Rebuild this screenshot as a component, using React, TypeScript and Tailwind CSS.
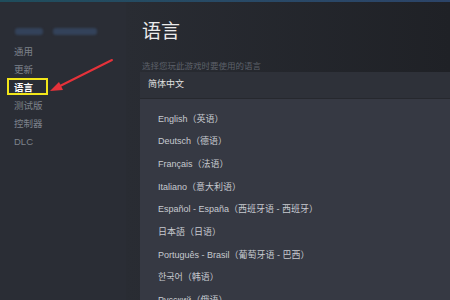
import React from "react";

const langs = [
  "English（英语）",
  "Deutsch（德语）",
  "Français（法语）",
  "Italiano（意大利语）",
  "Español - España（西班牙语 - 西班牙）",
  "日本語（日语）",
  "Português - Brasil（葡萄牙语 - 巴西）",
  "한국어（韩语）",
  "Русский（俄语）",
];

const side = ["通用", "更新", "语言", "测试版", "控制器", "DLC"];

export default function App() {
  return (
    <div
      className="w-[450px] h-[300px] overflow-hidden flex flex-col bg-[#24262d]"
      style={{ fontFamily: '"Liberation Sans", "Noto Sans CJK SC", sans-serif' }}
    >
      <div className="h-[2px] shrink-0 bg-gradient-to-r from-[#1f4d5c] via-[#284a66] to-[#2c4468]" />
      <div className="flex flex-1 min-h-0">
        {/* sidebar */}
        <div className="w-[126px] shrink-0 bg-[#2a2d35] relative">
          <div className="flex gap-[10px] pl-[15px] pt-[26px]">
            <div className="w-[28px] h-[7px] rounded-[3px] bg-[#33425a] blur-[1px]" />
            <div className="w-[44px] h-[7px] rounded-[3px] bg-[#33425a] blur-[1px]" />
          </div>
          <div className="flex flex-col pt-[8px]">
            {side.map((s) => (
              <div
                key={s}
                className={
                  "h-[18px] flex items-center pl-[14px] text-[9.5px] " +
                  (s === "语言" ? "text-white font-bold" : "text-[#7d828b]")
                }
              >
                {s === "语言" ? (
                  <span className="relative">
                    {s}
                    <span className="absolute -left-[7px] -top-[3px] w-[41px] h-[17px] border-2 border-[#f2e61a]" />
                  </span>
                ) : (
                  s
                )}
              </div>
            ))}
          </div>
          <svg
            className="absolute left-[46px] top-[54px]"
            width="72"
            height="40"
            viewBox="0 0 72 40"
          >
            <line x1="66" y1="4" x2="12" y2="31" stroke="#e5323a" strokeWidth="2" strokeLinecap="round" />
            <polygon points="4,35 13,26 17,34" fill="#e5323a" />
          </svg>
        </div>
        {/* main */}
        <div className="flex-1 min-h-0 flex flex-col bg-gradient-to-r from-[#292c33] to-[#1f2126]">
          <div className="shrink-0 pl-[16px] pt-[17px] text-[19px] leading-[26px] text-[#ececec]">语言</div>
          <div className="shrink-0 pl-[16px] pt-[15px] text-[8.5px] leading-[12px] text-[#5d616a]">
            选择您玩此游戏时要使用的语言
          </div>
          <div className="shrink-0 ml-[14px] h-[27px] flex items-center pl-[8px] bg-[#2e3139] border-b border-[#26282e] text-[9px] text-[#e2e2e2]">
            简体中文
          </div>
          <div className="ml-[14px] flex-1 min-h-0 overflow-hidden bg-[#363943] pt-[9px]">
            {langs.map((l) => (
              <div
                key={l}
                className="h-[22.7px] flex items-center pl-[18px] text-[9px] text-[#c7cad0] whitespace-nowrap"
              >
                {l}
              </div>
            ))}
          </div>
        </div>
      </div>
    </div>
  );
}
